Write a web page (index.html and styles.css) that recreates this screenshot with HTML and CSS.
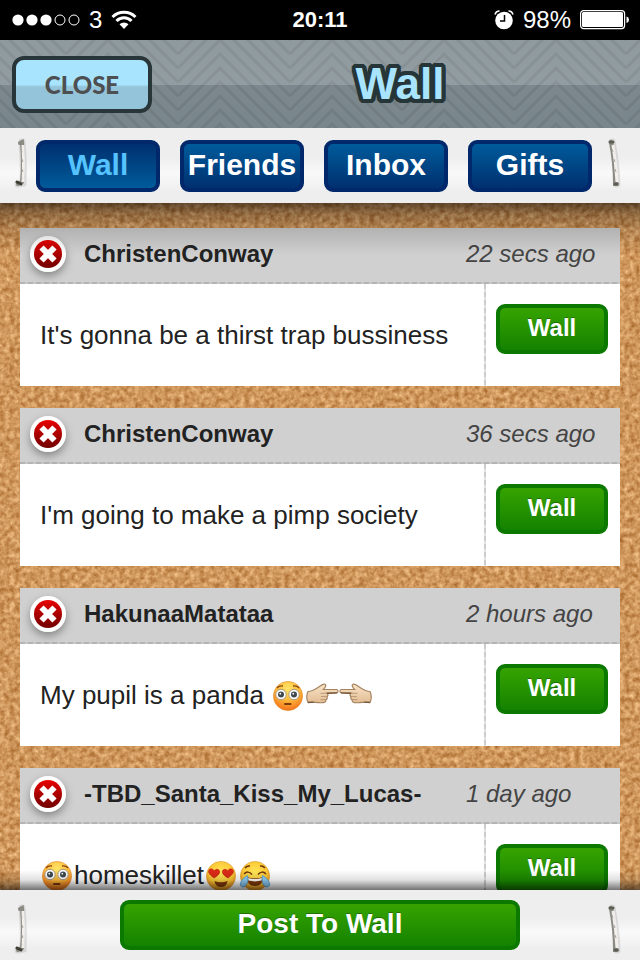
FILE: index.html
```
<!DOCTYPE html>
<html lang="en">
<head>
    <meta charset="utf-8">
    <meta name="viewport" content="width=device-width">
    <title>Wall</title>
    <link rel="stylesheet" href="styles.css">
</head>
<body>
    <!-- shared icons -->
    <svg class="defs" width="0" height="0" aria-hidden="true">
        <defs>
            <linearGradient id="red" x1="0" y1="0" x2="0" y2="1">
                <stop offset="0" stop-color="#e80000"/>
                <stop offset="1" stop-color="#700000"/>
            </linearGradient>
            <linearGradient id="skin" x1="0" y1="0" x2="0" y2="1">
                <stop offset="0" stop-color="#f8e4c8"/>
                <stop offset="1" stop-color="#e3bd94"/>
            </linearGradient>
            <radialGradient id="yellow" cx="0.5" cy="0.4" r="0.62">
                <stop offset="0" stop-color="#ffe85a"/>
                <stop offset="0.65" stop-color="#fdc936"/>
                <stop offset="1" stop-color="#e8831a"/>
            </radialGradient>
            <radialGradient id="orange" cx="0.5" cy="0.25" r="0.75">
                <stop offset="0" stop-color="#ffe568"/>
                <stop offset="0.5" stop-color="#fdbd3c"/>
                <stop offset="1" stop-color="#f4701c"/>
            </radialGradient>
        </defs>
        <symbol id="remove" viewBox="0 0 36 36">
            <circle cx="18" cy="18" r="18" fill="#fff"/>
            <circle cx="18" cy="18" r="14" fill="url(#red)"/>
            <path d="M11.500 11.500l13 13M24.500 11.500l-13 13" stroke="#fff" stroke-width="6"/>
        </symbol>
        <symbol id="flushed" viewBox="0 0 34 32">
            <circle cx="17" cy="16" r="14.600" fill="url(#orange)" stroke="#e08a26" stroke-width=".6"/>
            <path d="M6 8q2-2.500 6-2M22 6q4-.5 6 2" fill="none" stroke="#8a4a12" stroke-width="1.400"/>
            <circle cx="10" cy="14.500" r="5.200" fill="#fff" stroke="#a9967c"/>
            <circle cx="23" cy="14.500" r="5.200" fill="#fff" stroke="#a9967c"/>
            <circle cx="10" cy="14.500" r="3" fill="#3d4850"/>
            <circle cx="23" cy="14.500" r="3" fill="#3d4850"/>
            <circle cx="9.300" cy="13.700" r=".9" fill="#fff"/>
            <circle cx="22.300" cy="13.700" r=".9" fill="#fff"/>
            <path d="M14 24h5.500" stroke="#7a3a0a" stroke-width="2" stroke-linecap="round"/>
        </symbol>
        <symbol id="point" viewBox="0 0 34 32">
            <path d="M3 11.500C7 11.500 10 9.500 13 7.500c3-2 5-4 7-3.300 1.600.8.6 3-1.600 5.300H31.500c2 0 2 3.500 0 3.500l-9.500.3c1.500 1 1.200 2.900-.2 3.200.9 1.500.3 2.800-1 3.200.4 1.600-.6 2.800-2.300 2.900-4 .5-7.500-.2-10-.4L3 22.500C1.400 19 1.600 14.500 3 11.500z" fill="url(#skin)" stroke="#a58360" stroke-width="1.200"/>
            <path d="M15.500 13.300l6.500-.1M16 16.600l5.500-.2M15.500 19.700l5-.2" stroke="#b08e6c" stroke-width=".8"/>
            <path d="M3 22.500l5.500-.4M32 12.900l-10 .4" stroke="#75583c" stroke-width="1.400"/>
        </symbol>
        <symbol id="hearts" viewBox="0 0 34 32">
            <circle cx="17" cy="16" r="14.600" fill="url(#yellow)" stroke="#d99a26" stroke-width=".6"/>
            <path d="M10 18C6 15 3.500 12.500 5 10c1.400-1.900 4.300-1.300 5.200 1 1.300-2.200 4.400-2.300 5.400 0 .7 2.700-2.200 5.100-5.600 7z" fill="#dc2a16" stroke="#b01c10" stroke-width=".5"/>
            <path d="M24 18c4-3 6.500-5.500 5-8-1.400-1.900-4.300-1.300-5.200 1-1.300-2.200-4.400-2.300-5.400 0-.7 2.700 2.200 5.100 5.600 7z" fill="#dc2a16" stroke="#b01c10" stroke-width=".5"/>
            <path d="M10.500 21q6.500 2.500 13 0-.8 6-6.500 6t-6.500-6z" fill="#843a0c"/>
        </symbol>
        <symbol id="joy" viewBox="0 0 34 32">
            <circle cx="17" cy="16" r="14.600" fill="url(#yellow)" stroke="#d99a26" stroke-width=".6"/>
            <path d="M7 8q2-2.500 5-2M22 6q3-.5 5 2M6 14q4-4 8 .5M20 14.500q4-4.500 8-.5" fill="none" stroke="#6e340b" stroke-width="1.500"/>
            <path d="M8.500 17q8.500 2.500 17 0-.8 9-8.500 9t-8.500-9z" fill="#843a0c"/>
            <path d="M10 18q7 1.800 14 0l-.4 2.600q-6.600 1.600-13.200 0z" fill="#fff"/>
            <path d="M9.500 15.500c1.500 6-1 12-5 11.500-4-1-2.500-7 5-11.500zM24.500 15.500c-1.500 6 1 12 5 11.500 4-1 2.500-7-5-11.500z" fill="#8fcdf5" stroke="#4d9fd8" stroke-width=".8"/>
        </symbol>
        <symbol id="stitch" viewBox="0 0 14 52">
            <path d="M8 5q2 22 1 41l-5 1" fill="none" stroke="#000" stroke-opacity=".1" stroke-width="7" stroke-linecap="round"/>
            <path d="M6 6l2-1q2 22 0 40l-4 2" fill="none" stroke="#8b8b83" stroke-width="4" stroke-linecap="round"/>
            <path d="M9 8q1 20 0 37" fill="none" stroke="#f2eeec" stroke-width="3"/>
            <path d="M7 12l1 3M8 22l1 3M8 32l1 3M7 40l1 2" stroke="#a9a69e" stroke-width="1"/>
            <path d="M3 45l4 2" stroke="#3d3e34" stroke-width="3" stroke-linecap="round"/>
        </symbol>
        <symbol id="stitch-end" viewBox="0 0 14 52">
            <path d="M4 5q4 20 5 42" fill="none" stroke="#000" stroke-opacity=".1" stroke-width="7" stroke-linecap="round"/>
            <path d="M3 5q4 20 4 42h2" fill="none" stroke="#8b8b83" stroke-width="4" stroke-linecap="round"/>
            <path d="M5 8q3 18 4 37" fill="none" stroke="#f2eeec" stroke-width="3"/>
            <path d="M4 12l1 3M6 22l1 3M7 32l1 3" stroke="#a9a69e" stroke-width="1"/>
            <path d="M2 5h3M7 47h2" stroke="#5d5e54" stroke-width="3" stroke-linecap="round"/>
        </symbol>
    </svg>

    <div class="status">
        <div class="status-left">
            <svg width="68" height="12" viewBox="0 0 68 12" fill="#fff">
                <circle cx="6" cy="6" r="5.600"/>
                <circle cx="20" cy="6" r="5.600"/>
                <circle cx="34" cy="6" r="5.600"/>
                <circle cx="48" cy="6" r="5" fill="none" stroke="#fff"/>
                <circle cx="62" cy="6" r="5" fill="none" stroke="#fff"/>
            </svg>
            <span>3</span>
            <svg width="26" height="20" viewBox="0 0 26 20">
                <path d="M1.500 7a16.500 16.500 0 0 1 23 0M5.500 11a10.500 10.500 0 0 1 15 0" fill="none" stroke="#fff" stroke-width="3"/>
                <path d="M13 19l-4.500-4.700a6.500 6.500 0 0 1 9 0z" fill="#fff"/>
            </svg>
        </div>
        <span class="clock">20:11</span>
        <div class="status-right">
            <svg width="20" height="20" viewBox="0 0 20 20">
                <circle cx="10" cy="10.500" r="8.800" fill="#fff"/>
                <path d="M10.500 5v6H6" fill="none" stroke="#000" stroke-width="1.500"/>
                <path d="M1 4.500Q2 1 5.500 1M19 4.500Q18 1 14.500 1" fill="none" stroke="#fff" stroke-width="1.600"/>
            </svg>
            <span>98%</span>
            <svg width="50" height="20" viewBox="0 0 50 20">
                <rect x=".6" y=".6" width="44" height="18" rx="3" fill="none" stroke="#fff" stroke-width="1.200"/>
                <rect x="2" y="2" width="41" height="15" rx="1.500" fill="#fff"/>
                <path d="M46.500 6.500q2.500.5 2.500 3.200t-2.500 3.200z" fill="#fff"/>
            </svg>
        </div>
    </div>

    <header class="header">
        <button class="close" type="button">CLOSE</button>
        <h1 class="title">Wall</h1>
    </header>

    <nav class="tabs">
        <svg class="stitch left"><use href="#stitch"/></svg>
        <button class="tab active" type="button">Wall</button>
        <button class="tab" type="button">Friends</button>
        <button class="tab" type="button">Inbox</button>
        <button class="tab" type="button">Gifts</button>
        <svg class="stitch right"><use href="#stitch-end"/></svg>
    </nav>

    <main class="board">
        <article class="post">
            <div class="post-head">
                <button class="remove" type="button" aria-label="Remove post"><svg><use href="#remove"/></svg></button>
                <h2 class="name">ChristenConway</h2>
                <span class="time">22 secs ago</span>
            </div>
            <div class="post-body">
                <p class="message">It's gonna be a thirst trap bussiness</p>
                <div class="action"><button class="green" type="button">Wall</button></div>
            </div>
        </article>
        <article class="post">
            <div class="post-head">
                <button class="remove" type="button" aria-label="Remove post"><svg><use href="#remove"/></svg></button>
                <h2 class="name">ChristenConway</h2>
                <span class="time">36 secs ago</span>
            </div>
            <div class="post-body">
                <p class="message">I'm going to make a pimp society</p>
                <div class="action"><button class="green" type="button">Wall</button></div>
            </div>
        </article>
        <article class="post">
            <div class="post-head">
                <button class="remove" type="button" aria-label="Remove post"><svg><use href="#remove"/></svg></button>
                <h2 class="name">HakunaaMatataa</h2>
                <span class="time">2 hours ago</span>
            </div>
            <div class="post-body">
                <p class="message">My pupil is a panda <svg class="emoji"><use href="#flushed"/></svg><svg class="emoji"><use href="#point"/></svg><svg class="emoji flip"><use href="#point"/></svg></p>
                <div class="action"><button class="green" type="button">Wall</button></div>
            </div>
        </article>
        <article class="post">
            <div class="post-head">
                <button class="remove" type="button" aria-label="Remove post"><svg><use href="#remove"/></svg></button>
                <h2 class="name">-TBD_Santa_Kiss_My_Lucas-</h2>
                <span class="time">1 day ago</span>
            </div>
            <div class="post-body">
                <p class="message"><svg class="emoji"><use href="#flushed"/></svg>homeskillet<svg class="emoji"><use href="#hearts"/></svg><svg class="emoji"><use href="#joy"/></svg></p>
                <div class="action"><button class="green" type="button">Wall</button></div>
            </div>
        </article>
    </main>

    <footer class="footer">
        <svg class="stitch left"><use href="#stitch"/></svg>
        <button class="green big" type="button">Post To Wall</button>
        <svg class="stitch right"><use href="#stitch-end"/></svg>
    </footer>
</body>
</html>
```

FILE: styles.css
```
* {
    box-sizing: border-box;
}

body {
    margin: 0;
    height: 100vh;
    display: flex;
    flex-direction: column;
    overflow: hidden;
    font-family: "Liberation Sans", Arial, sans-serif;
    color: #222;
}

button {
    font-family: inherit;
    font-weight: bold;
    padding: 0;
    cursor: pointer;
}

.defs {
    position: absolute;
}

/* status bar */
.status {
    flex: none;
    height: 40px;
    padding: 0 12px;
    display: grid;
    grid-template-columns: 1fr auto 1fr;
    align-items: center;
    background: #000;
    color: #fff;
    font-size: 24px;
}

.status-left,
.status-right {
    display: flex;
    align-items: center;
    gap: 9px;
}

.status-right {
    justify-content: flex-end;
    margin-right: -2px;
}

.clock {
    font-size: 22px;
    font-weight: bold;
}

/* header */
.header {
    flex: none;
    height: 88px;
    padding-left: 12px;
    display: flex;
    align-items: center;
    background:
        url("data:image/svg+xml,%3Csvg xmlns='http://www.w3.org/2000/svg' width='112' height='112'%3E%3Cpath d='M0-14l42-42 70 70M0 0l42-42 70 70M0 14l42-42 70 70M0 28l42-42 70 70M0 42L42 0l70 70M0 56l42-42 70 70M0 70l42-42 70 70M0 84l42-42 70 70M0 98l42-42 70 70M0 112l42-42 70 70M0 126l42-42 70 70M0 140l42-42 70 70M0 154l42-42 70 70M0-28l42-42 70 70' fill='none' stroke='%23000' stroke-opacity='.07' stroke-width='3'/%3E%3C/svg%3E") 66px 0,
        linear-gradient(#8f9a9f 0, #929da2 45px, #7c888d 45px, #79868b 100%);
}

.close {
    width: 140px;
    height: 57px;
    border: 4px solid #293639;
    border-radius: 12px;
    background: linear-gradient(#a9e4ff 50%, #94c4da 55%);
    color: #4d4f50;
    font-family: Lato, sans-serif;
    font-size: 24px;
    font-weight: 900;
}

/* the ring of shadows makes an outline with round corners */
.title {
    flex: 1;
    margin: 0;
    padding-left: 8px;
    text-align: center;
    font-size: 44px;
    line-height: 48px;
    color: #a9e4ff;
    text-shadow:
        4px 0 #263537, -4px 0 #263537, 0 4px #263537, 0 -4px #263537,
        3px 3px #263537, -3px 3px #263537, 3px -3px #263537, -3px -3px #263537,
        4px 2px #263537, -4px 2px #263537, 4px -2px #263537, -4px -2px #263537,
        2px 4px #263537, -2px 4px #263537, 2px -4px #263537, -2px -4px #263537;
}

/* paper strips at the top and bottom */
.tabs,
.footer {
    position: relative;
    z-index: 1;
    flex: none;
    background: linear-gradient(#eee 0, #eee 40%, #f9f9f9 60%, #eee 85%, #eee 100%);
}

.tabs {
    height: 75px;
    padding: 12px 48px 0 36px;
    display: grid;
    grid-template-columns: repeat(4, 1fr);
    gap: 20px;
}

.tabs::after,
.footer::before {
    content: "";
    position: absolute;
    left: 0;
    right: 0;
    pointer-events: none;
}

.tabs::after {
    top: 100%;
    height: 52px;
    background: linear-gradient(rgba(0, 0, 0, 0.55), rgba(0, 0, 0, 0.3) 20%, rgba(0, 0, 0, 0.14) 50%, transparent);
}

.tab {
    height: 52px;
    padding-bottom: 2px;
    border: 4px solid #00286a;
    border-radius: 9px;
    background: linear-gradient(#005b9b, #00306f);
    color: #fff;
    font-size: 30px;
    line-height: 40px;
}

.tab.active {
    background: linear-gradient(#00306f, #005b9b);
    color: #55c3ff;
}

.stitch {
    position: absolute;
    top: 9px;
    width: 14px;
    height: 52px;
}

.stitch.left {
    left: 14px;
}

.stitch.right {
    right: 18px;
}

.footer .stitch {
    top: 13px;
}

/* cork board */
.board {
    flex: 1;
    min-height: 0;
    overflow: hidden;
    padding: 25px 20px;
    display: flex;
    flex-direction: column;
    gap: 22px;
    background: #cd965c url("data:image/svg+xml,%3Csvg xmlns='http://www.w3.org/2000/svg' width='640' height='700'%3E%3Cfilter id='c' x='0' y='0' width='100%25' height='100%25' color-interpolation-filters='sRGB'%3E%3CfeTurbulence type='fractalNoise' baseFrequency='.2' numOctaves='3' seed='4' stitchTiles='stitch'/%3E%3CfeColorMatrix values='.4 0 0 0 .61 .48 0 0 0 .35 .5 0 0 0 .11 0 0 0 0 1'/%3E%3C/filter%3E%3Crect width='640' height='700' filter='url(%23c)'/%3E%3C/svg%3E");
}

.post {
    flex: none;
    background: #fff;
}

.post-head {
    height: 56px;
    padding: 0 10px 4px;
    display: flex;
    align-items: center;
    background:
        repeating-linear-gradient(90deg, #b4b4b4 0, #b4b4b4 5px, #c6c6c6 5px, #c6c6c6 8px) bottom / 100% 2px no-repeat,
        #d0d0d0;
}

.remove {
    width: 36px;
    height: 36px;
    border: none;
    border-radius: 50%;
    background: none;
    box-shadow: 0 4px 8px rgba(0, 0, 0, 0.35);
}

.remove svg {
    display: block;
    width: 36px;
    height: 36px;
}

.name {
    flex: 1;
    margin: 0;
    padding-left: 18px;
    font-size: 24px;
    line-height: 28px;
}

.time {
    width: 144px;
    font-size: 24px;
    line-height: 28px;
    font-style: italic;
    color: #444;
}

.post-body {
    display: flex;
    height: 102px;
}

.message {
    flex: 1;
    align-self: center;
    margin: 0;
    padding-left: 20px;
    font-size: 26px;
    line-height: 36px;
}

.emoji {
    width: 34px;
    height: 32px;
    vertical-align: -8px;
}

.flip {
    transform: scaleX(-1);
}

.action {
    width: 136px;
    padding: 20px 12px 0;
    background: repeating-linear-gradient(#ccc 0, #ccc 5px, #e2e2e2 5px, #e2e2e2 8px) left / 2px 100% no-repeat;
}

.green {
    width: 100%;
    height: 50px;
    padding-bottom: 2px;
    border: 4px solid #0b7800;
    border-radius: 9px;
    background: linear-gradient(#36a300, #148200);
    color: #fff;
    font-size: 24px;
    text-shadow: 0 -1px 0 rgba(0, 0, 0, 0.3);
}

/* bottom bar */
.footer {
    height: 70px;
    padding: 10px 120px;
}

.footer::before {
    bottom: 100%;
    height: 20px;
    background: linear-gradient(transparent, rgba(0, 0, 0, 0.12) 50%, rgba(0, 0, 0, 0.55));
}

.green.big {
    font-size: 28px;
}
```
